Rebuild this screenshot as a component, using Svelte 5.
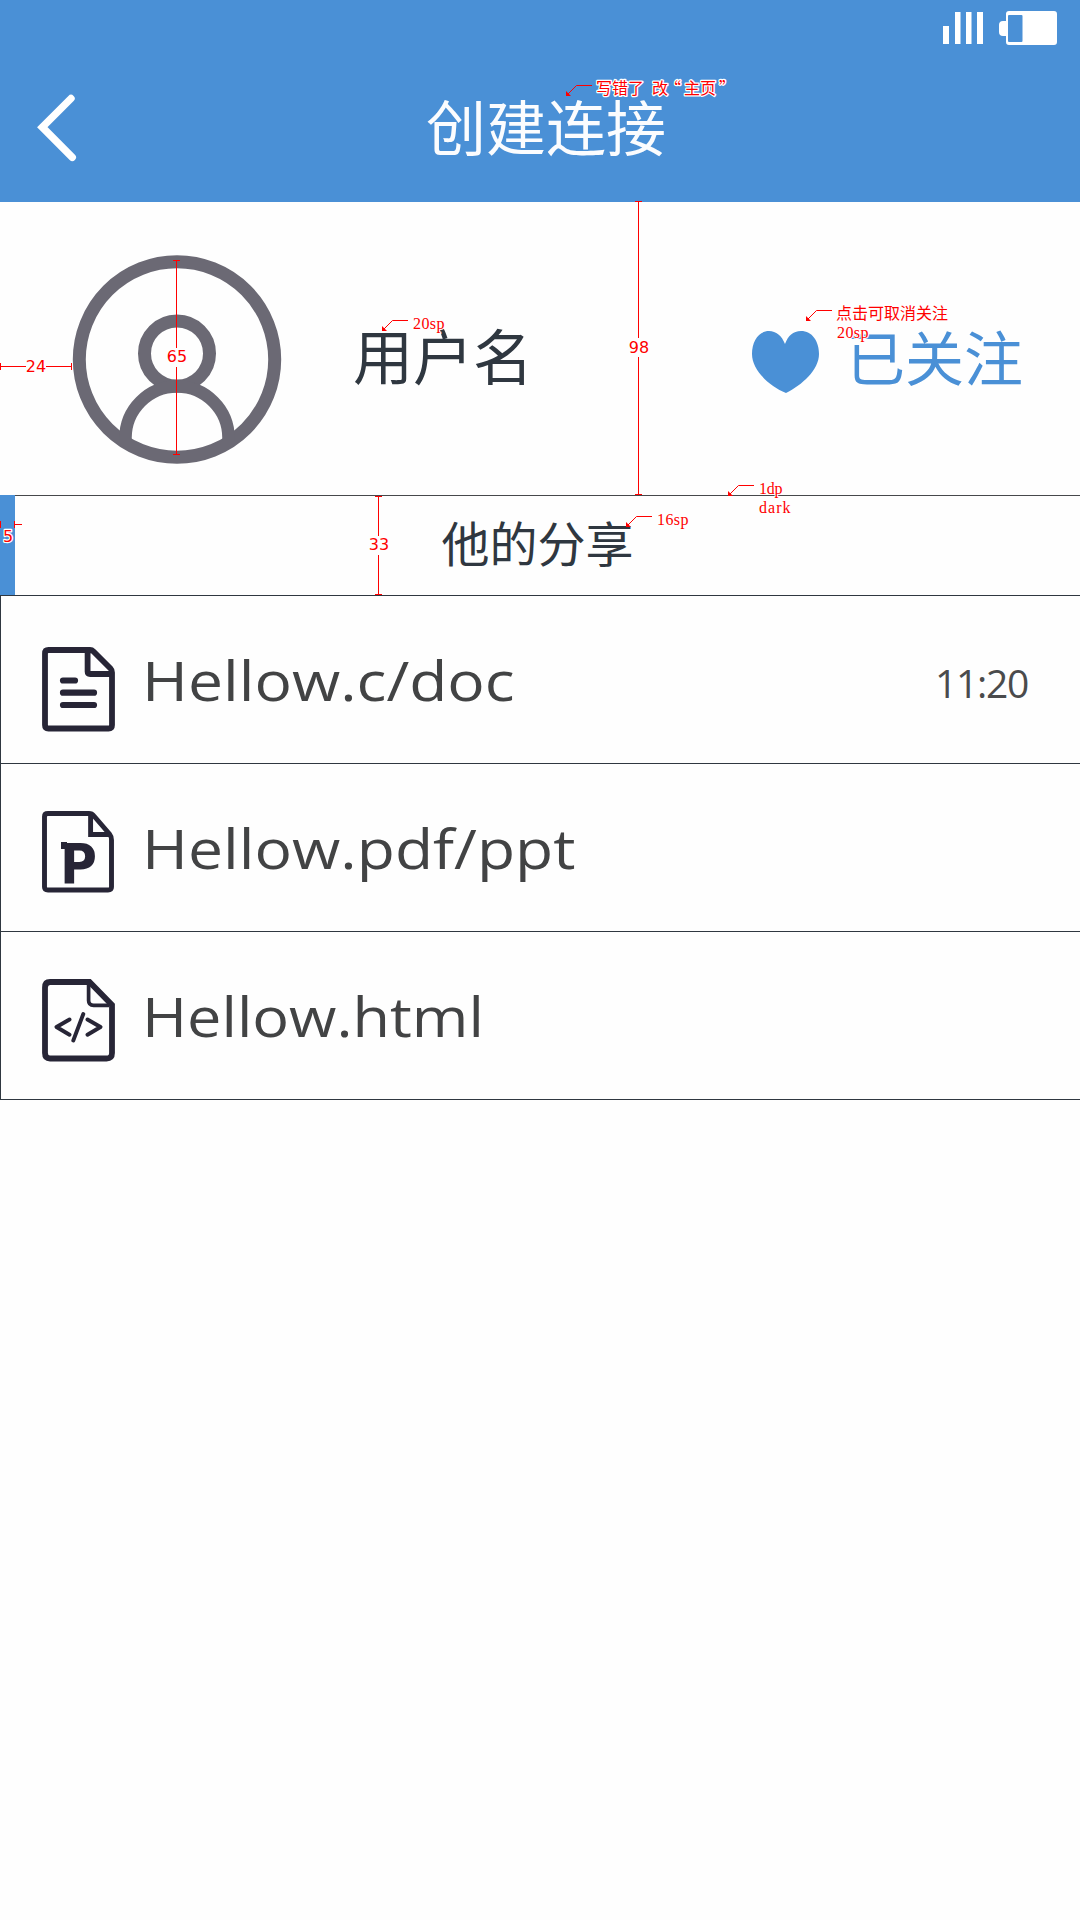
<script>
  // stretch widens each name horizontally
  const files = [
    { name: 'Hellow.c/doc', kind: 'doc', time: '11:20', stretch: 1.133 },
    { name: 'Hellow.pdf/ppt', kind: 'ppt', time: '', stretch: 1.134 },
    { name: 'Hellow.html', kind: 'html', time: '', stretch: 1.112 }
  ];

  // Leader arrows: x/y is the pointed-at corner
  const arrows = [
    { x: 566, y: 96 },
    { x: 382, y: 331 },
    { x: 806, y: 321 },
    { x: 728, y: 496 },
    { x: 626, y: 527 }
  ];

  const notes = [
    { x: '596 612 628 644 652 665 684 700 719', y: 94, text: '写错了 改“主页”', cjk: true, halo: true },
    { x: 413, y: 329, text: '20sp', width: 31.5 },
    { x: 836, y: 319, text: '点击可取消关注', cjk: true },
    { x: 837, y: 338, text: '20sp', width: 31.5 },
    { x: 759, y: 494, text: '1dp', width: 23.5 },
    { x: 759, y: 513, text: 'dark', width: 31.5 },
    { x: 657, y: 525, text: '16sp', width: 31.5 }
  ];

  const labels = [
    { x: 36, y: 372, text: '24' },
    { x: 177, y: 362, text: '65' },
    { x: 639, y: 353, text: '98' },
    { x: 379, y: 550, text: '33' },
    { x: 8, y: 542, text: '5', halo: true }
  ];
</script>

<main class="screen">
  <header>
    <div class="status">
      <svg width="42" height="34" viewBox="942 12 42 34" fill="#fff">
        <path d="M943 27h6v18h-6zM955 13h5.5v32h-5.5zM966 13h5.5v32h-5.5zM977 13h6v32h-6z" />
      </svg>
      <svg width="60" height="36" viewBox="998 10 60 36">
        <path fill="#fff" d="M1009 11h45q3 0 3 3v28q0 3-3 3h-45q-3 0-3-3v-6h-3q-4 0-4-4v-7q0-4 4-4h3v-7q0-3 3-3z" />
        <rect x="1008" y="15" width="14.5" height="27" rx="1" fill="#4a90d6" />
      </svg>
    </div>
    <div class="bar">
      <svg class="back" width="42" height="70" viewBox="36 92 42 70">
        <path d="M71 98.5 42.3 127.2 72.3 157.3" fill="none" stroke="#fff" stroke-width="7.4" stroke-linecap="round" />
      </svg>
      <h1>创建连接</h1>
    </div>
  </header>

  <section class="profile">
    <svg class="avatar" width="210" height="210" viewBox="72 255 210 210" fill="none" stroke="#6b6974" stroke-width="13">
      <circle cx="177" cy="359.5" r="97.7" />
      <circle cx="177" cy="353.5" r="32.5" />
      <path d="M125.5 441v-3a51.5 51.5 0 0 1 103 0v3" stroke-width="12.5" />
    </svg>
    <span class="name">用户名</span>
    <button class="follow">
      <svg width="68" height="64" viewBox="752 330 68 64" fill="#4a90d6">
        <path d="M785 344C782 336 776 331 769 331C759 331 752 341 752 354C752 370 769 386 786 393C802 385 819 370 819 354C819 341 812 331 801 331C793 331 788 336 785 344Z" />
      </svg>
      <span>已关注</span>
    </button>
  </section>

  <section class="heading"><h2>他的分享</h2></section>

  <ul>
    {#each files as file}
      <li>
        <svg class="icon" width="116" height="167" viewBox="1 0 116 167" fill="none" stroke="#272536" stroke-width="5.8">
          {#if file.kind === 'doc'}
            <path d="M48.5 54H90q2 0 3.500 1.500L110.500 72.500q1.500 1.500 1.500 4v52.500q0 3.500-3.500 3.500h-60q-3.500 0-3.500-3.500V57.500q0-3.500 3.500-3.500zM87.600 54v21.500q0 2.500 2.500 2.500H112" />
            <path d="M63 84.500h12M63 96.700h31M63 109h31" stroke-linecap="round" stroke-width="6.2" />
          {:else if file.kind === 'ppt'}
            <path d="M48 49.500H89q3 0 5 2.500L109.500 70q2 2.500 2 6v47q0 3-3.500 3H48q-3.500 0-3.500-3V52.500q0-3 3.500-3zM90.600 50v20.500H110" stroke-width="4.900" />
            <g fill="#272536" stroke="none">
              <text class="glyph" x="60" y="119" textLength="37" lengthAdjust="spacingAndGlyphs">P</text>
              <path d="M61 78h6v7h-6z" />
            </g>
          {:else}
            <path d="M50 50H89.500L112 73v48q0 5.500-5.500 5.500H50q-5 0-5-5.500V55.500q0-5.500 5-5.500z" />
            <path d="M88.600 52v16.500q0 4.800 5 4.800H109" stroke-width="3.700" />
            <path d="M69.500 87.500 56.500 95l13 7.700M87.500 87.500 100.500 95l-13 7.700M83.300 82 73.300 108.500" stroke-width="3.900" stroke-linecap="round" stroke-linejoin="round" />
          {/if}
        </svg>
        <span class="file" style="--stretch: {file.stretch}">{file.name}</span>
        {#if file.time}<time>{file.time}</time>{/if}
      </li>
    {/each}
  </ul>

  <!-- Redline annotations float above the page -->
  <svg class="redlines" width="1080" height="1920" viewBox="0 0 1080 1920">
    <g fill="none" stroke="#f00" shape-rendering="crispEdges">
      <path d="M.5 363v7M71.500 363v7M0 366.500H26M46 366.500H72" />
      <path d="M173 260.500h7M173 454.500h7M176.500 260v87.500M176.500 367v87.500" />
      <path d="M635 201.500h7M635 494.500h7M638.500 201v137M638.500 357v138" />
      <path d="M375 496.500h7M375 594.500h7M378.500 496v40M378.500 555v40" />
      <path d="M.5 521v7M14.500 521v7M15 524.500h7" />
    </g>
    {#each arrows as a}
      <g transform="translate({a.x} {a.y})">
        <path d="M2-2 10.500-10.500H26" fill="none" stroke="#f00" />
        <path d="M0-5V0H5z" fill="#f00" />
      </g>
    {/each}
    {#each notes as n}
      <text class="note" class:cjk={n.cjk} class:halo={n.halo} x={n.x} y={n.y} textLength={n.width}>{n.text}</text>
    {/each}
    {#each labels as l}
      <text class="label" class:halo={l.halo} x={l.x} y={l.y}>{l.text}</text>
    {/each}
  </svg>
</main>

<style>
  :global(body) { background: #fefefe; }
  .screen {
    position: relative;
    width: 1080px;
    height: 1920px;
    overflow: hidden;
    background: #fefefe;
    font-family: "Open Sans", "Noto Sans CJK SC", sans-serif;
    color: #2f3740;
  }
  h1, h2, ul { margin: 0; padding: 0; }
  svg { display: block; flex: none; }
  header { height: 202px; background: #4a90d6; box-sizing: border-box; padding-top: 10px; }
  .status { height: 36px; display: flex; justify-content: flex-end; align-items: center; gap: 14px; padding-right: 22px; }
  .bar { display: grid; grid-template-columns: 78px 1fr 66px; align-items: start; padding-top: 35px; }
  .back { margin: 11px 0 0 36px; }
  h1 { font: 400 60px/88px "Noto Sans CJK SC", sans-serif; color: #fbfcfe; text-align: center; }
  .profile { height: 293px; display: flex; align-items: center; }
  .avatar { margin: 22px 0 0 72px; }
  .name { font: 400 60px/88px "Noto Sans CJK SC", sans-serif; margin: 11px 0 0 71px; flex: 1; }
  .follow { display: flex; align-items: center; gap: 25.500px; margin: 28px 57px 0 0; padding: 0; border: 0; background: none; color: #4a90d6; }
  .follow span { font: 400 59px/88px "Noto Sans CJK SC", sans-serif; margin-top: -14px; }
  .follow svg { margin-top: -1px; }
  .heading { height: 100px; box-sizing: border-box; border-top: 1px solid #46484b; display: grid; place-items: center; position: relative; }
  .heading::before { content: ""; position: absolute; left: 0; top: -1px; width: 15px; height: 100px; background: #4a90d6; }
  h2 { font: 400 48px/70px "Noto Sans CJK SC", sans-serif; padding: 0 5px 10px 0; }
  ul { list-style: none; border-left: 1px solid #2f3740; border-bottom: 1px solid #2f3740; }
  li { height: 168px; box-sizing: border-box; border-top: 1px solid #2f3740; display: flex; align-items: center; color: #424344; }
  .file { font-size: 55px; line-height: 80px; margin-left: 25px; transform: scaleX(var(--stretch)); transform-origin: left; white-space: nowrap; }
  time { margin: 6px 52px 0 auto; font-size: 39px; letter-spacing: -1.300px; color: #4a4b4c; }
  .glyph { font: bold 56px "DejaVu Sans", sans-serif; }
  .redlines { position: absolute; inset: 0; pointer-events: none; }
  .note, .label { fill: #f00; stroke: #fefefe; stroke-width: 2px; paint-order: stroke; }
  .note { font: 16px "Liberation Serif", serif; white-space: pre; }
  .cjk { font: 400 16px "Noto Sans CJK SC", sans-serif; }
  .label { font: 16px "DejaVu Sans", sans-serif; text-anchor: middle; stroke: none; }
  .halo { stroke: #fff; stroke-width: 2.500px; stroke-linejoin: round; }
</style>
